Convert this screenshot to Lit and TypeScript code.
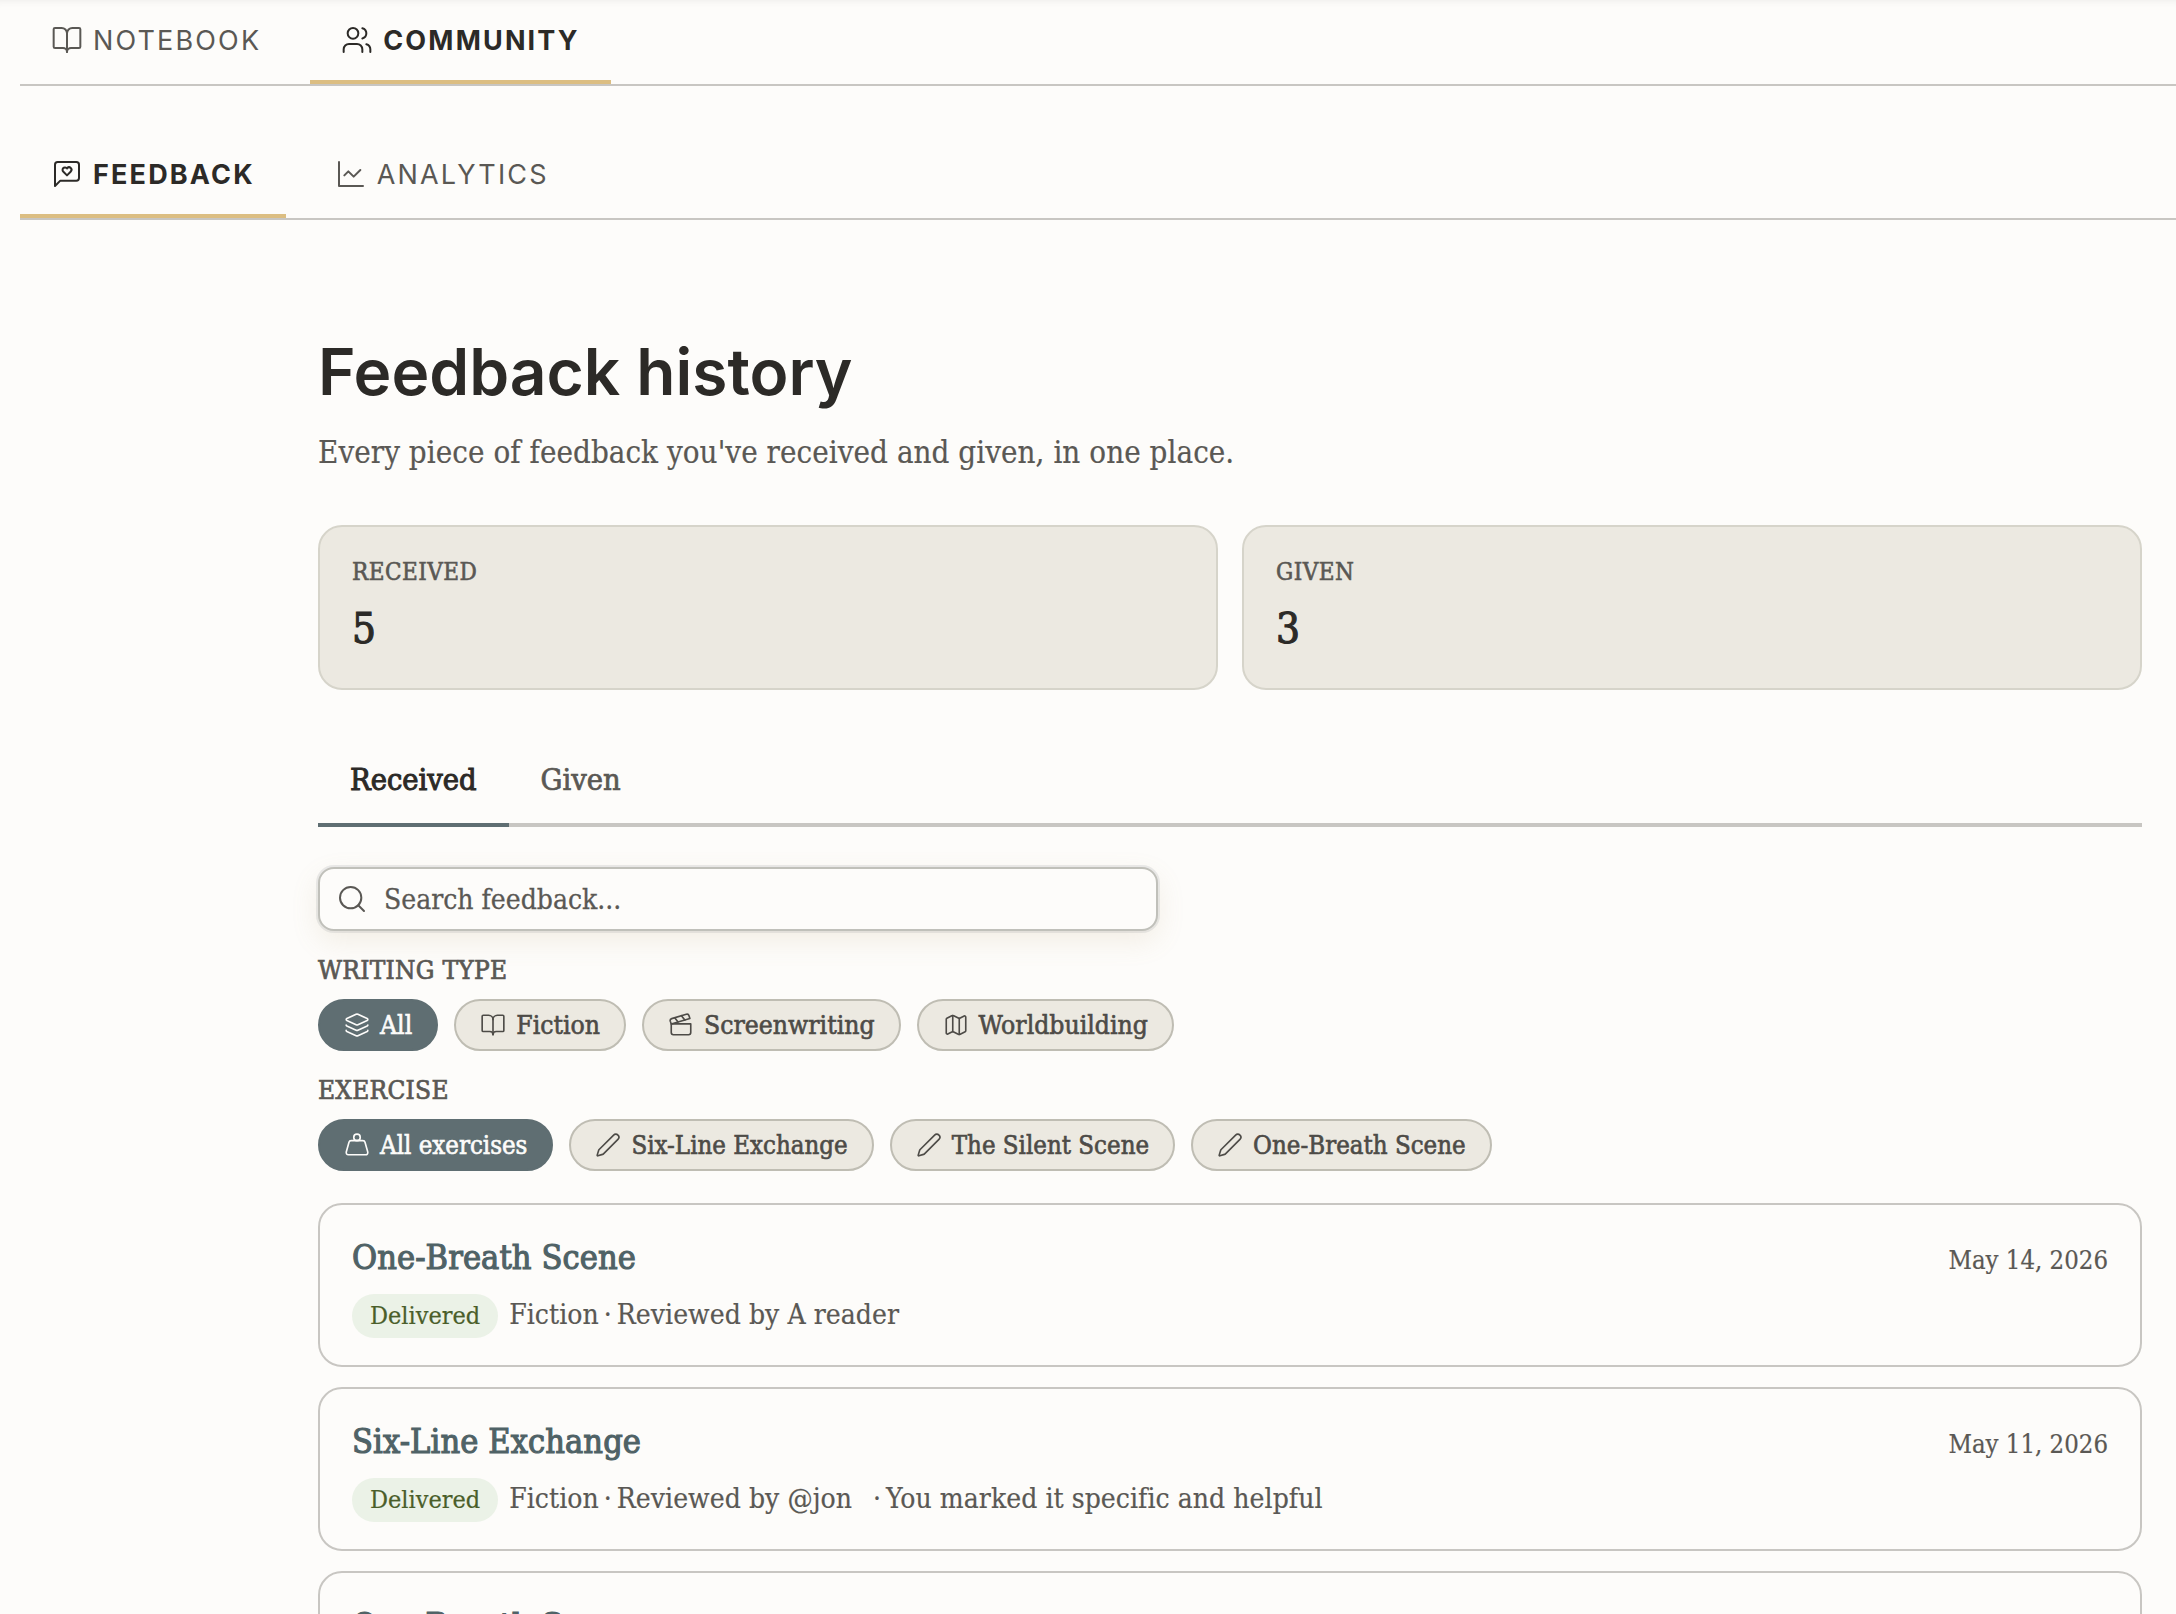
import { LitElement, html, svg, css } from 'lit';
import { customElement } from 'lit/decorators.js';

const ICONS: Record<string, unknown> = {
  book: svg`<path d="M12 7v14"/><path d="M3 18a1 1 0 0 1-1-1V4a1 1 0 0 1 1-1h5a4 4 0 0 1 4 4 4 4 0 0 1 4-4h5a1 1 0 0 1 1 1v13a1 1 0 0 1-1 1h-6a3 3 0 0 0-3 3 3 3 0 0 0-3-3z"/>`,
  users: svg`<path d="M16 21v-2a4 4 0 0 0-4-4H6a4 4 0 0 0-4 4v2"/><circle cx="9" cy="7" r="4"/><path d="M22 21v-2a4 4 0 0 0-3-3.87"/><path d="M16 3.13a4 4 0 0 1 0 7.75"/>`,
  feedback: svg`<path d="M21 15a2 2 0 0 1-2 2H7l-4 4V5a2 2 0 0 1 2-2h14a2 2 0 0 1 2 2z"/><path d="M14.8 7.5a1.84 1.84 0 0 0-2.6 0l-.2.3-.3-.3a1.84 1.84 0 1 0-2.4 2.8L12 13l2.7-2.7c.9-.9.8-2.1.1-2.8"/>`,
  chart: svg`<path d="M3 3v18h18"/><path d="m19 9-5 5-4-4-3 3"/>`,
  search: svg`<circle cx="11" cy="11" r="8"/><path d="m21 21-4.3-4.3"/>`,
  layers: svg`<path d="M12.83 2.18a2 2 0 0 0-1.66 0L2.6 6.08a1 1 0 0 0 0 1.83l8.58 3.91a2 2 0 0 0 1.66 0l8.58-3.9a1 1 0 0 0 0-1.83z"/><path d="M2 12a1 1 0 0 0 .58.91l8.6 3.91a2 2 0 0 0 1.65 0l8.58-3.9A1 1 0 0 0 22 12"/><path d="M2 17a1 1 0 0 0 .58.91l8.6 3.91a2 2 0 0 0 1.65 0l8.58-3.9A1 1 0 0 0 22 17"/>`,
  clapper: svg`<path d="M20.2 6 3 11l-.9-2.4c-.3-1.1.3-2.2 1.3-2.5l13.5-4c1.1-.3 2.2.3 2.5 1.3Z"/><path d="m6.2 5.3 3.1 3.9"/><path d="m12.4 3.4 3.1 4"/><path d="M3 11h18v8a2 2 0 0 1-2 2H5a2 2 0 0 1-2-2Z"/>`,
  map: svg`<path d="M14.106 5.553a2 2 0 0 0 1.788 0l3.659-1.83A1 1 0 0 1 21 4.619v12.764a1 1 0 0 1-.553.894l-4.553 2.277a2 2 0 0 1-1.788 0l-4.212-2.106a2 2 0 0 0-1.788 0l-3.659 1.83A1 1 0 0 1 3 19.381V6.618a1 1 0 0 1 .553-.894l4.553-2.277a2 2 0 0 1 1.788 0z"/><path d="M15 5.764v15"/><path d="M9 3.236v15"/>`,
  weight: svg`<circle cx="12" cy="5" r="3"/><path d="M6.5 8a2 2 0 0 0-1.905 1.46L2.1 18.5A2 2 0 0 0 4 21h16a2 2 0 0 0 1.925-2.54L19.4 9.5A2 2 0 0 0 17.48 8Z"/>`,
  pen: svg`<path d="M21.174 6.812a1 1 0 0 0-3.986-3.987L3.842 16.174a2 2 0 0 0-.5.83l-1.321 4.352a.5.5 0 0 0 .623.622l4.353-1.32a2 2 0 0 0 .83-.497z"/>`,
};

const icon = (name: string, cls = '') =>
  html`<svg class="icon ${cls}" viewBox="0 0 24 24" fill="none" stroke="currentColor" stroke-width="1.5" stroke-linecap="round" stroke-linejoin="round">${ICONS[name]}</svg>`;

const writingTypes = [
  { label: 'All', icon: 'layers', active: true },
  { label: 'Fiction', icon: 'book' },
  { label: 'Screenwriting', icon: 'clapper' },
  { label: 'Worldbuilding', icon: 'map' },
];

const exercises = [
  { label: 'All exercises', icon: 'weight', active: true },
  { label: 'Six-Line Exchange', icon: 'pen' },
  { label: 'The Silent Scene', icon: 'pen' },
  { label: 'One-Breath Scene', icon: 'pen' },
];

const feedback = [
  { title: 'One-Breath Scene', date: 'May 14, 2026', reviewer: 'A reader' },
  { title: 'Six-Line Exchange', date: 'May 11, 2026', reviewer: '@jon', note: 'You marked it specific and helpful' },
  { title: 'One-Breath Scene', date: 'May 8, 2026', reviewer: 'A reader' },
];

@customElement('app-root')
export class AppRoot extends LitElement {
  static styles = css`
    :host {
      display: block;
      height: 100vh;
      overflow: hidden;
      background: #fdfcfa;
      color: #2c2a27;
      font-family: "DejaVu Serif Condensed", "DejaVu Serif", serif;
      -webkit-text-stroke: 0.2px;
      box-shadow: inset 0 8px 8px -8px rgba(0, 0, 0, 0.08);
    }

    .icon {
      width: 32px;
      height: 32px;
      flex: none;
    }

    .nav {
      display: flex;
      gap: 18px;
      margin-left: 20px;
      border-bottom: 2px solid #c8c6c2;
    }

    .nav + .nav {
      margin-top: 48px;
    }

    .nav-tab {
      display: flex;
      align-items: center;
      gap: 10px;
      height: 80px;
      padding: 0 31px;
      border-bottom: 4px solid transparent;
      font-family: Inter, sans-serif;
      font-size: 27px;
      letter-spacing: 0.08em;
      -webkit-text-stroke: 0;
      color: #5a5854;
    }

    .nav-tab.active {
      border-bottom-color: #dcbe82;
      color: #2c2a27;
      font-weight: 700;
    }

    main {
      padding: 114px 34px 0 318px;
    }

    h1 {
      margin: 0;
      font-family: Inter, sans-serif;
      font-size: 64px;
      line-height: 76px;
      font-weight: 600;
      -webkit-text-stroke: 0;
      color: #2c2a27;
    }

    .subtitle {
      margin: 20px 0 0;
      font-size: 31px;
      line-height: 44px;
      letter-spacing: 0.05px;
      color: #5a5854;
    }

    .stats {
      display: grid;
      grid-template-columns: 1fr 1fr;
      gap: 24px;
      margin-top: 51px;
    }

    .stat {
      height: 165px;
      box-sizing: border-box;
      padding: 29px 32px;
      border: 2px solid #d6d4ca;
      border-radius: 24px;
      background: #ece9e1;
    }

    .stat-label {
      font-size: 24px;
      line-height: 32px;
      letter-spacing: 0.02em;
      -webkit-text-stroke: 0.6px;
      color: #5a5854;
    }

    .stat-value {
      margin-top: 15px;
      font-size: 42px;
      line-height: 52px;
      -webkit-text-stroke: 1.1px;
      color: #2c2a27;
    }

    .subtabs {
      display: flex;
      margin-top: 47px;
      border-bottom: 4px solid #c8c6c2;
    }

    .subtab {
      height: 90px;
      box-sizing: border-box;
      margin-bottom: -4px;
      padding: 0 32px;
      border-bottom: 4px solid transparent;
      font-size: 30.5px;
      line-height: 86px;
      -webkit-text-stroke: 0.7px;
      color: #5a5854;
    }

    .subtab.active {
      border-bottom-color: #5f6e72;
      color: #2c2a27;
      -webkit-text-stroke: 1px;
    }

    .search {
      display: flex;
      align-items: center;
      gap: 16px;
      width: 840px;
      height: 64px;
      box-sizing: border-box;
      margin-top: 40px;
      padding: 0 16px;
      border: 2px solid #c0c0ba;
      border-radius: 16px;
      background: #fdfcfa;
      box-shadow: 0 0 0 2px rgba(95, 110, 114, 0.12), 0 10px 28px rgba(180, 150, 100, 0.14);
      font-size: 28px;
      -webkit-text-stroke: 0.3px;
      color: #5a5854;
    }

    .filter-label {
      margin-top: 23px;
      font-size: 26px;
      line-height: 32px;
      letter-spacing: 0.01em;
      -webkit-text-stroke: 0.7px;
      color: #5a5854;
    }

    .pills {
      display: flex;
      gap: 16px;
      margin-top: 13px;
    }

    .pill {
      display: flex;
      align-items: center;
      gap: 10px;
      height: 52px;
      box-sizing: border-box;
      padding: 0 24px;
      border: 2px solid #bfbdb3;
      border-radius: 26px;
      background: #ece9e1;
      font-size: 26.3px;
      -webkit-text-stroke: 0.6px;
      color: #4d4b47;
    }

    .pills.exercise .pill {
      font-size: 25.6px;
    }

    .pill.active {
      border-color: #5f6e72;
      background: #5f6e72;
      color: #fdfcfa;
    }

    .pill .icon {
      width: 26px;
      height: 26px;
    }

    .cards {
      display: flex;
      flex-direction: column;
      gap: 20px;
      margin-top: 32px;
    }

    .card {
      height: 164px;
      box-sizing: border-box;
      padding: 30px 32px 28px;
      border: 2px solid #c8c6c2;
      border-radius: 24px;
      background: #fdfcfa;
    }

    .card-top {
      display: flex;
      justify-content: space-between;
      align-items: baseline;
    }

    .card-title {
      font-size: 34px;
      line-height: 44px;
      letter-spacing: 0.1px;
      -webkit-text-stroke: 1.1px;
      color: #4f6266;
    }

    .date {
      font-size: 25.5px;
      color: #5a5854;
    }

    .meta {
      display: flex;
      align-items: baseline;
      margin-top: 14px;
      font-size: 28px;
      line-height: 44px;
      letter-spacing: 0.05px;
      color: #5a5854;
    }

    .badge {
      margin-right: 11px;
      padding: 0 18px;
      border-radius: 22px;
      background: #ebf2e7;
      font-size: 25px;
      letter-spacing: 0;
      color: #4a5e2a;
    }

    .dot {
      padding: 0 5px;
    }

    .note {
      margin-left: 16px;
    }
  `;

  private pill(p: { label: string; icon: string; active?: boolean }) {
    return html`<div class="pill ${p.active ? 'active' : ''}">${icon(p.icon)}<span>${p.label}</span></div>`;
  }

  render() {
    return html`
      <nav class="nav">
        <div class="nav-tab">${icon('book')}NOTEBOOK</div>
        <div class="nav-tab active">${icon('users')}COMMUNITY</div>
      </nav>
      <nav class="nav">
        <div class="nav-tab active">${icon('feedback')}FEEDBACK</div>
        <div class="nav-tab">${icon('chart')}ANALYTICS</div>
      </nav>
      <main>
        <h1>Feedback history</h1>
        <p class="subtitle">Every piece of feedback you've received and given, in one place.</p>
        <div class="stats">
          <div class="stat"><div class="stat-label">RECEIVED</div><div class="stat-value">5</div></div>
          <div class="stat"><div class="stat-label">GIVEN</div><div class="stat-value">3</div></div>
        </div>
        <div class="subtabs">
          <div class="subtab active">Received</div>
          <div class="subtab">Given</div>
        </div>
        <div class="search">${icon('search')}<span>Search feedback...</span></div>
        <div class="filter-label">WRITING TYPE</div>
        <div class="pills">${writingTypes.map((p) => this.pill(p))}</div>
        <div class="filter-label">EXERCISE</div>
        <div class="pills exercise">${exercises.map((p) => this.pill(p))}</div>
        <div class="cards">
          ${feedback.map(
            (f) => html`
              <div class="card">
                <div class="card-top">
                  <span class="card-title">${f.title}</span>
                  <span class="date">${f.date}</span>
                </div>
                <div class="meta">
                  <span class="badge">Delivered</span>
                  <span>Fiction</span><span class="dot">·</span><span>Reviewed by ${f.reviewer}</span>
                  ${f.note ? html`<span class="dot note">·</span><span>${f.note}</span>` : ''}
                </div>
              </div>
            `,
          )}
        </div>
      </main>
    `;
  }
}
